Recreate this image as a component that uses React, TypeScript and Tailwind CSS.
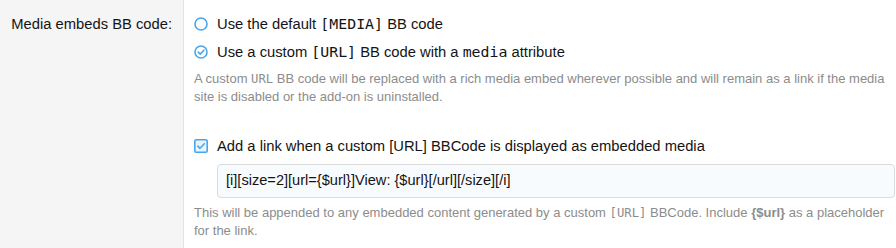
import React from "react";

const sans = { fontFamily: '"Liberation Sans", Arial, sans-serif' };
const mono = '"DejaVu Sans Mono", "Liberation Mono", monospace';

function RadioEmpty() {
  return (
    <svg width="14" height="14" viewBox="0 0 14 14" className="shrink-0">
      <circle cx="7" cy="7" r="6" fill="none" stroke="#47a7eb" strokeWidth="1.6" />
    </svg>
  );
}
function RadioChecked() {
  return (
    <svg width="14" height="14" viewBox="0 0 14 14" className="shrink-0">
      <circle cx="7" cy="7" r="6" fill="none" stroke="#47a7eb" strokeWidth="1.6" />
      <path d="M4.2 7.2 L6.2 9.1 L9.9 5.2" fill="none" stroke="#47a7eb" strokeWidth="1.6" strokeLinecap="round" strokeLinejoin="round" />
    </svg>
  );
}
function CheckBox() {
  return (
    <svg width="14" height="14" viewBox="0 0 14 14" className="shrink-0">
      <rect x="0.8" y="0.8" width="12.4" height="12.4" rx="1.5" fill="#eaf4fc" stroke="#47a7eb" strokeWidth="1.6" />
      <path d="M3.8 7.2 L6 9.3 L10.3 4.8" fill="none" stroke="#47a7eb" strokeWidth="1.6" strokeLinecap="round" strokeLinejoin="round" />
    </svg>
  );
}

function Code({ children }: { children: React.ReactNode }) {
  return <span className="text-[0.94em]" style={{ fontFamily: mono }}>{children}</span>;
}
function CodeL({ children }: { children: React.ReactNode }) {
  return <span className="text-[1.01em]" style={{ fontFamily: mono }}>{children}</span>;
}

export default function App() {
  return (
    <div className="flex w-[896px] h-[248px] bg-white text-[#141414]" style={sans}>
      <div className="w-[184px] shrink-0 bg-[#f5f5f5] border-r border-[#e4e4e4] pt-[14px] pr-[11px] text-right">
        <div className="h-[20px] leading-[20px] text-[14.75px]">Media embeds BB code:</div>
      </div>
      <div className="flex-1 pl-[10px] pr-[1px] pt-[14px]">
        <div className="flex items-center gap-[9px] h-[20px] text-[14.75px]">
          <RadioEmpty />
          <span>Use the default <CodeL>[MEDIA]</CodeL> BB code</span>
        </div>
        <div className="flex items-center gap-[9px] h-[20px] mt-[8px] text-[14.75px]">
          <RadioChecked />
          <span>Use a custom <CodeL>[URL]</CodeL> BB code with a <CodeL>media</CodeL> attribute</span>
        </div>
        <div className="mt-[8px] text-[13px] leading-[18px] text-[#8c8c8c]">
          A custom <Code>URL</Code> BB code will be replaced with a rich media embed wherever possible and will remain as a link if the media site is disabled or the add-on is uninstalled.
        </div>
        <div className="flex items-center gap-[9px] h-[20px] mt-[30px] text-[14.75px]">
          <CheckBox />
          <span>Add a link when a custom [URL] BBCode is displayed as embedded media</span>
        </div>
        <div className="ml-[23px] mt-[8px] h-[34px] flex items-center px-[8px] rounded-[4px] border border-[#dcdcdc] bg-[#f8fbfe] text-[14.6px]">
          [i][size=2][url={"{$url}"}]View: {"{$url}"}[/url][/size][/i]
        </div>
        <div className="mt-[6px] text-[13px] leading-[18px] text-[#8c8c8c]">
          This will be appended to any embedded content generated by a custom <Code>[URL]</Code> BBCode. Include <b>{"{$url}"}</b> as a placeholder for the link.
        </div>
      </div>
    </div>
  );
}
